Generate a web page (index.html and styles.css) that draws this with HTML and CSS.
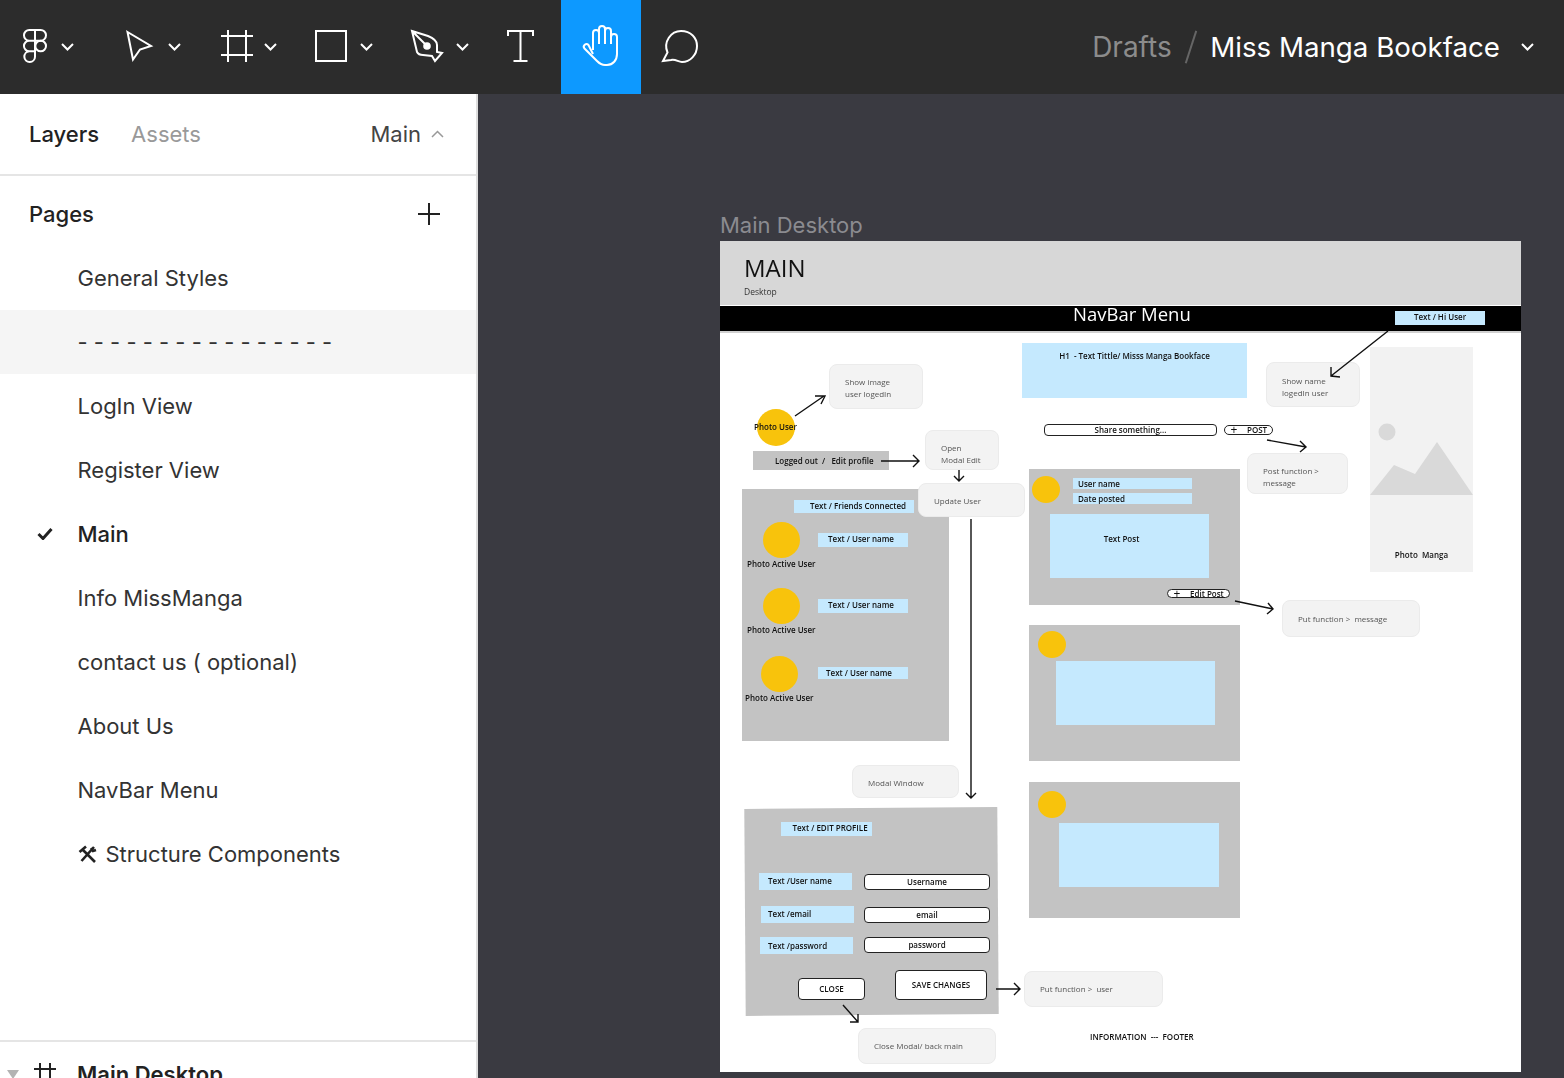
FILE: index.html
```html
<!DOCTYPE html>
<html lang="en">
<head>
  <meta charset="UTF-8" />
  <title>Miss Manga Bookface</title>
  <link rel="stylesheet" href="styles.css">
</head>
<body>
  <header class="toolbar">
    <div class="tool tool-logo">
      <svg class="tool-icon" viewBox="13 0 48 94"><path d="M35 30h-5.700a5.330 5.330 0 0 0 0 10.670H35zM35 30h5.670a5.330 5.330 0 0 1 0 10.670H35zM35 40.670h-5.700a5.330 5.330 0 0 0 0 10.660H35zM35 51.330h-5.700a5.330 5.330 0 1 0 5.700 5.340z"/><circle cx="40.670" cy="46" r="5.330"/></svg>
      <svg class="chevron" viewBox="0 0 13 8"><path d="M1 1l5.500 5.500L12 1"/></svg>
    </div>
    <div class="tool tool-move">
      <svg class="tool-icon" viewBox="120 0 48 94"><path d="M127.500 32L151 46l-11 3.500-7 10z"/></svg>
      <svg class="chevron" viewBox="0 0 13 8"><path d="M1 1l5.500 5.500L12 1"/></svg>
    </div>
    <div class="tool">
      <svg class="tool-icon" viewBox="216 0 48 94"><path d="M221 36h32M221 55h32M228 30v32M246 30v32"/></svg>
      <svg class="chevron" viewBox="0 0 13 8"><path d="M1 1l5.500 5.500L12 1"/></svg>
    </div>
    <div class="tool">
      <svg class="tool-icon" viewBox="312 0 48 94"><path d="M316 31h30v30h-30z"/></svg>
      <svg class="chevron" viewBox="0 0 13 8"><path d="M1 1l5.500 5.500L12 1"/></svg>
    </div>
    <div class="tool">
      <svg class="tool-icon" viewBox="408 0 48 94"><path d="M412 31l16 5c5 2 9 5 9 9l0 7 5 1-7 8-3-5-9-1c-3 0-5-1-6-3zM412 31l15 15"/><circle class="dot" cx="427" cy="46" r="2.800"/></svg>
      <svg class="chevron" viewBox="0 0 13 8"><path d="M1 1l5.500 5.500L12 1"/></svg>
    </div>
    <div class="tool tool-text">
      <svg class="tool-icon" viewBox="504 0 33 94"><path d="M508 36v-5h25v5M520.500 31v30M513.500 61h14"/></svg>
    </div>
    <div class="tool-hand">
      <svg class="tool-icon" viewBox="561 0 80 94"><path d="M593 50V33a3 3 0 0 1 6 0v-4a3 3 0 0 1 6 0v2a3 3 0 0 1 6 0v6a3 3 0 0 1 6 0v17c0 6-4 11-10 11h-2c-4 0-6-2-8-4l-12.500-12.500a2.600 2.600 0 0 1 4-3.500L593 54M599 33v11M605 31v13M611 37v7"/></svg>
    </div>
    <div class="tool-comment">
      <svg class="tool-icon" viewBox="658 0 44 94"><path d="M663 61l4.500-8.500C663 42 671 31 681 31c10 0 16 7 16 15 0 9-7 16-15 16-4 0-6-3-11-2z"/></svg>
    </div>
    <div class="breadcrumb">
      <span class="crumb-parent">Drafts</span>
      <span class="crumb-slash"></span>
      <span class="crumb-file">Miss Manga Bookface</span>
      <svg class="chevron" viewBox="0 0 13 8"><path d="M1 1l5.500 5.500L12 1"/></svg>
    </div>
  </header>

  <div class="workspace">
    <aside class="sidebar">
      <div class="tabs">
        <span class="tab-active">Layers</span>
        <span class="tab">Assets</span>
        <span class="tab-page">Main</span>
        <svg class="chevron-up" viewBox="0 0 13 8"><path d="M1 7l5.500-5.500L12 7"/></svg>
      </div>
      <div class="pages-head">
        <span>Pages</span>
        <svg class="plus" viewBox="0 0 22 22"><path d="M11 0v22M0 11h22"/></svg>
      </div>
      <ul class="pages">
        <li class="page">General Styles</li>
        <li class="page page-hover">- - - - - - - - - - - - - - - -</li>
        <li class="page">LogIn View</li>
        <li class="page">Register View</li>
        <li class="page page-current">
          <svg class="check" viewBox="0 0 16 13"><path d="M1.500 7l4.500 4.500 8.500-9.500"/></svg>
          Main
        </li>
        <li class="page">Info MissManga</li>
        <li class="page">contact us ( optional)</li>
        <li class="page">About Us</li>
        <li class="page">NavBar Menu</li>
        <li class="page">
          <svg class="tools" viewBox="0 0 20 18"><path d="M5 5l12 12M1.500 7l6.500-5.500M16 2L3.500 16M13 3l2 3 3-1"/></svg>
          Structure Components
        </li>
      </ul>
      <div class="layer-row">
        <span class="layer-caret"></span>
        <svg class="layer-frame" viewBox="0 0 22 22"><path d="M0 6h22M0 17h22M6 0v22M16 0v22"/></svg>
        <span>Main Desktop</span>
      </div>
    </aside>

    <main class="canvas">
      <div class="frame-title">Main Desktop</div>
      <div class="frame">
        <div class="frame-head">
          <div class="head-title">MAIN</div>
          <div class="head-sub">Desktop</div>
        </div>
        <div class="navbar">NavBar Menu</div>

        <div class="item tag hi-user">Text / Hi User</div>
        <div class="item tag h1-box">H1 &nbsp;- Text Tittle/ Misss Manga Bookface</div>

        <div class="item note note-image">Show image<br>user logedIn</div>
        <div class="item avatar photo-user"></div>
        <div class="item label photo-label">Photo User</div>
        <div class="item logged-bar">Logged out &nbsp;/ &nbsp; Edit profile</div>
        <div class="item note note-open">Open<br>Modal Edit</div>

        <div class="item panel friends"></div>
        <div class="item note note-update">Update User</div>
        <div class="item tag tag-friends">Text / Friends Connected</div>
        <div class="item avatar friend-a"></div>
        <div class="item label friend-label-a">Photo Active User</div>
        <div class="item tag tag-user tag-user-a">Text / User name</div>
        <div class="item avatar friend-b"></div>
        <div class="item label friend-label-b">Photo Active User</div>
        <div class="item tag tag-user tag-user-b">Text / User name</div>
        <div class="item avatar friend-c"></div>
        <div class="item label friend-label-c">Photo Active User</div>
        <div class="item tag tag-user tag-user-c">Text / User name</div>

        <div class="item input share">Share something...</div>
        <div class="item input pill post-btn"><span class="btn-plus">+</span>POST</div>
        <div class="item note note-show-name">Show name<br>logedIn user</div>
        <div class="item note note-post">Post function &gt;<br>message</div>

        <div class="item panel post-1"></div>
        <div class="item avatar post-1-avatar"></div>
        <div class="item tag meta meta-name">User name</div>
        <div class="item tag meta meta-date">Date posted</div>
        <div class="item tag post-1-body">Text Post</div>
        <div class="item input pill edit-btn"><span class="btn-plus">+</span>Edit Post</div>
        <div class="item note note-put">Put function &gt; &nbsp;message</div>

        <div class="item panel post-2"></div>
        <div class="item avatar post-2-avatar"></div>
        <div class="item tag post-2-body"></div>

        <div class="item panel post-3"></div>
        <div class="item avatar post-3-avatar"></div>
        <div class="item tag post-3-body"></div>

        <div class="item manga">
          <svg class="manga-art" viewBox="0 0 103 150">
            <circle cx="17" cy="85" r="8.500"/>
            <path d="M0 148l24-30 21 9 22-32 36 53z"/>
          </svg>
          <div class="manga-label">Photo &nbsp;Manga</div>
        </div>

        <div class="item note note-modal">Modal Window</div>
        <div class="item modal"></div>
        <div class="item tag tag-edit">Text / EDIT PROFILE</div>
        <div class="item tag field field-name">Text /User name</div>
        <div class="item tag field field-email">Text /email</div>
        <div class="item tag field field-pass">Text /password</div>
        <div class="item input box box-name">Username</div>
        <div class="item input box box-email">email</div>
        <div class="item input box box-pass">password</div>
        <div class="item input action close-btn">CLOSE</div>
        <div class="item input action save-btn">SAVE CHANGES</div>
        <div class="item note note-put-user">Put function &gt; &nbsp;user</div>
        <div class="item note note-close">Close Modal/ back main</div>
        <div class="item label footer-label">INFORMATION &nbsp;--- &nbsp;FOOTER</div>

        <svg class="arrows" viewBox="720 241 801 831">
          <path d="M795 416l29-20M815 396h10l-4 8"/>
          <path d="M881 461h38M913 455l6 6-6 6"/>
          <path d="M959 470v11M954 476l5 5 5-5"/>
          <path d="M971 519v279M966 793l5 5 5-5"/>
          <path d="M1388 331l-57 45M1331 367v9l9 1"/>
          <path d="M1267 440l39 7M1300 441l6 6-6 5"/>
          <path d="M1235 601l38 8M1268 603l5 6-6 5"/>
          <path d="M996 989h24M1014 983l6 6-6 6"/>
          <path d="M843 1005l15 17M858 1014v8l-8 0"/>
        </svg>
      </div>
    </main>
  </div>
</body>
</html>
```

FILE: styles.css
```css
* {
  box-sizing: border-box;
}
html, body {
  margin: 0;
  height: 1078px;
  overflow: hidden;
}
body {
  font-family: Inter, "Liberation Sans", sans-serif;
  color: #333;
  background: #3a3a41;
}

/* top bar */
.toolbar {
  display: flex;
  height: 94px;
  padding-left: 13px;
  background: #2c2c2c;
}
.tool {
  display: flex;
  align-items: center;
  width: 96px;
}
.tool-logo {
  width: 107px;
}
.tool-move {
  width: 96px;
}
.tool-text {
  width: 57px;
}
.tool-icon {
  height: 94px;
  width: 48px;
  fill: none;
  stroke: #fff;
  stroke-width: 2;
  flex: none;
}
.tool-icon .dot {
  fill: #fff;
}
.tool-text .tool-icon {
  width: 33px;
}
.tool-hand {
  width: 80px;
  background: #0d99ff;
}
.tool-hand .tool-icon {
  width: 80px;
}
.tool-comment {
  margin-left: 17px;
}
.tool-comment .tool-icon {
  width: 44px;
}
.chevron {
  width: 13px;
  height: 8px;
  fill: none;
  stroke: #fff;
  stroke-width: 2;
  flex: none;
}
.breadcrumb {
  display: flex;
  align-items: center;
  margin-left: auto;
  padding-right: 30px;
  font-size: 27.700px;
}
.crumb-parent {
  font-size: 28px;
  color: #8c8c8c;
}
.crumb-slash {
  width: 1.500px;
  height: 34px;
  margin: 0 19px 0 18px;
  background: #666;
  transform: rotate(18deg);
}
.crumb-file {
  color: #fff;
  margin-right: 21px;
}

/* left panel */
.workspace {
  display: flex;
  height: 984px;
}
.sidebar {
  display: flex;
  flex-direction: column;
  width: 478px;
  flex: none;
  background: #fff;
  border-right: 2px solid #ddd;
  font-size: 22px;
}
.tabs {
  display: flex;
  align-items: center;
  height: 82px;
  padding: 0 32px 0 29px;
  border-bottom: 2px solid #e5e5e5;
}
.tab-active {
  font-weight: 500;
  color: #222;
}
.tab {
  margin-left: 32px;
  color: #999;
}
.tab-page {
  margin-left: auto;
  color: #444;
}
.chevron-up {
  width: 13px;
  height: 8px;
  margin-left: 10px;
  fill: none;
  stroke: #999;
  stroke-width: 1.500;
}
.pages-head {
  display: flex;
  align-items: center;
  justify-content: space-between;
  height: 70px;
  padding: 6px 36px 0 29px;
  font-weight: 500;
  color: #222;
}
.plus {
  width: 22px;
  height: 22px;
  fill: none;
  stroke: #222;
  stroke-width: 2;
}
.pages {
  flex: 1;
  margin: 0;
  padding: 0;
  list-style: none;
}
.page {
  position: relative;
  display: flex;
  align-items: center;
  gap: 8px;
  height: 64px;
  padding-left: 77.500px;
}
.page-hover {
  background: #f5f5f5;
}
.page-current {
  font-weight: 500;
  color: #222;
}
.check {
  position: absolute;
  left: 37px;
  top: 25px;
  width: 16px;
  height: 13px;
  fill: none;
  stroke: #222;
  stroke-width: 3;
}
.tools {
  width: 20px;
  height: 18px;
  fill: none;
  stroke: #222;
  stroke-width: 2.600;
}
.layer-row {
  display: flex;
  align-items: flex-start;
  flex: none;
  height: 38px;
  padding: 19px 0 0 7px;
  border-top: 2px solid #e5e5e5;
  font-weight: 600;
  color: #222;
  white-space: nowrap;
  overflow: hidden;
}
.layer-caret {
  width: 0;
  height: 0;
  margin-top: 9px;
  border-left: 6px solid transparent;
  border-right: 6px solid transparent;
  border-top: 9px solid #b3b3b3;
}
.layer-frame {
  width: 22px;
  height: 22px;
  margin: 2px 21px 0 15px;
  fill: none;
  stroke: #222;
  stroke-width: 2;
}

/* canvas */
.canvas {
  flex: 1;
  padding: 117px 0 0 242px;
}
.frame-title {
  height: 30px;
  font-size: 22px;
  line-height: 28px;
  color: #8b8b90;
}
.frame {
  position: relative;
  width: 801px;
  height: 831px;
  background: #fff;
  font-family: "Open Sans", sans-serif;
  color: #111;
  filter: blur(.3px);
}
.frame-head {
  height: 64px;
  padding: 12px 0 0 24px;
  background: #d7d7d7;
}
.head-title {
  font-size: 24px;
  line-height: 30px;
}
.head-sub {
  margin-top: 3px;
  font-size: 8.500px;
  line-height: 12px;
  color: #333;
}
.navbar {
  height: 27px;
  margin-top: 1px;
  padding-left: 353px;
  background: #000;
  border-bottom: 2px solid #d0d0d0;
  font-size: 18.500px;
  line-height: 16px;
  font-weight: 500;
  color: #fff;
}

/* drawn items, placed on the frame */
.item {
  position: absolute;
  font-size: 8px;
  line-height: 12px;
  font-weight: 600;
  white-space: nowrap;
}
.tag {
  display: flex;
  align-items: center;
  justify-content: center;
  background: #c5e9fe;
}
.note {
  padding-left: 15px;
  display: flex;
  align-items: center;
  background: #f3f3f3;
  border: 1px solid #ebebeb;
  border-radius: 8px;
  font-weight: 400;
  color: #555;
}
.panel {
  background: #c3c3c3;
}
.avatar {
  background: #f8c30c;
  border-radius: 50%;
}
.input {
  display: flex;
  align-items: center;
  justify-content: center;
  background: #fff;
  border: 1px solid #222;
  border-radius: 4px;
}
.pill {
  justify-content: flex-start;
  padding-left: 4px;
  border-radius: 5px;
}
.btn-plus {
  width: 10px;
  margin-right: 8px;
  text-align: center;
  font-size: 12px;
  font-weight: 400;
}

.hi-user { left: 675px; top: 70px; width: 90px; height: 14px; padding-bottom: 2px; }
.h1-box { left: 302px; top: 102px; width: 225px; height: 55px; align-items: flex-start; padding-top: 7px; }

.note-image { left: 109px; top: 123px; width: 94px; height: 45px; padding-top: 2px; }
.photo-user { left: 37px; top: 168px; width: 38px; height: 37px; }
.photo-label { left: 34px; top: 180px; }
.logged-bar { left: 33px; top: 210px; width: 136px; height: 19px; padding: 4px 0 0 22px; background: #c3c3c3; }
.note-open { left: 205px; top: 189px; width: 74px; height: 40px; padding-top: 8px; }
.note-update { left: 198px; top: 242px; width: 107px; height: 34px; padding-top: 2px; }

.friends { left: 22px; top: 248px; width: 207px; height: 252px; }
.tag-friends { left: 74px; top: 259px; width: 120px; height: 13px; padding: 0 0 2px 8px; }
.friend-a { left: 43px; top: 281px; width: 37px; height: 36px; }
.friend-b { left: 43px; top: 347px; width: 37px; height: 36px; }
.friend-c { left: 41px; top: 415px; width: 37px; height: 36px; }
.friend-label-a { left: 27px; top: 317px; }
.friend-label-b { left: 27px; top: 383px; }
.friend-label-c { left: 25px; top: 451px; }
.tag-user { left: 98px; width: 90px; height: 14px; padding: 0 4px 2px 0; }
.tag-user-a { top: 292px; }
.tag-user-b { top: 358px; }
.tag-user-c { top: 426px; height: 12px; padding: 0 8px 0 0; }

.share { left: 324px; top: 183px; width: 173px; height: 12px; }
.post-btn { left: 504px; top: 184px; width: 49px; height: 10px; }
.note-show-name { left: 546px; top: 121px; width: 94px; height: 45px; padding-top: 4px; }
.note-post { left: 527px; top: 212px; width: 101px; height: 41px; padding-top: 7px; }

.post-1 { left: 309px; top: 228px; width: 211px; height: 136px; }
.post-1-avatar { left: 312px; top: 235px; width: 28px; height: 27px; }
.meta { left: 353px; width: 119px; height: 11px; justify-content: flex-start; padding-left: 5px; }
.meta-name { top: 237px; }
.meta-date { top: 252px; }
.post-1-body { left: 330px; top: 273px; width: 159px; height: 64px; align-items: flex-start; padding: 19px 16px 0 0; }
.edit-btn { left: 447px; top: 348px; width: 63px; height: 9px; }
.note-put { left: 562px; top: 359px; width: 138px; height: 37px; }

.post-2 { left: 309px; top: 384px; width: 211px; height: 136px; }
.post-2-avatar { left: 318px; top: 390px; width: 28px; height: 27px; }
.post-2-body { left: 336px; top: 420px; width: 159px; height: 64px; }
.post-3 { left: 309px; top: 541px; width: 211px; height: 136px; }
.post-3-avatar { left: 318px; top: 550px; width: 28px; height: 27px; }
.post-3-body { left: 339px; top: 582px; width: 160px; height: 64px; }

.manga { left: 650px; top: 106px; width: 103px; height: 225px; background: #f2f2f2; }
.manga-art { display: block; width: 103px; height: 150px; fill: #d9d9d9; }
.manga-label { margin-top: 52px; text-align: center; }

.note-modal { left: 132px; top: 524px; width: 107px; height: 33px; padding-top: 2px; }
.modal { left: 25px; top: 567px; width: 253px; height: 207px; background: #c3c3c3; transform: rotate(-.4deg); }
.tag-edit { left: 61px; top: 581px; width: 91px; height: 14px; padding: 0 0 2px 7px; }
.field { width: 93px; height: 17px; justify-content: flex-start; padding: 0 0 2px 9px; }
.field-name { left: 39px; top: 632px; }
.field-email { left: 41px; top: 665px; padding-left: 7px; }
.field-pass { left: 40px; top: 696px; padding: 1px 0 0 8px; }
.box { left: 144px; width: 126px; height: 16px; }
.box-name { top: 633px; }
.box-email { top: 666px; }
.box-pass { top: 696px; }
.close-btn { left: 78px; top: 737px; width: 67px; height: 22px; }
.save-btn { left: 175px; top: 729px; width: 92px; height: 30px; }
.note-put-user { left: 304px; top: 730px; width: 139px; height: 36px; }
.note-close { left: 138px; top: 787px; width: 138px; height: 36px; }
.footer-label { left: 370px; top: 790px; }

.arrows {
  position: absolute;
  left: 0;
  top: 0;
  width: 801px;
  height: 831px;
  fill: none;
  stroke: #111;
  stroke-width: 1.400;
  pointer-events: none;
}
```
